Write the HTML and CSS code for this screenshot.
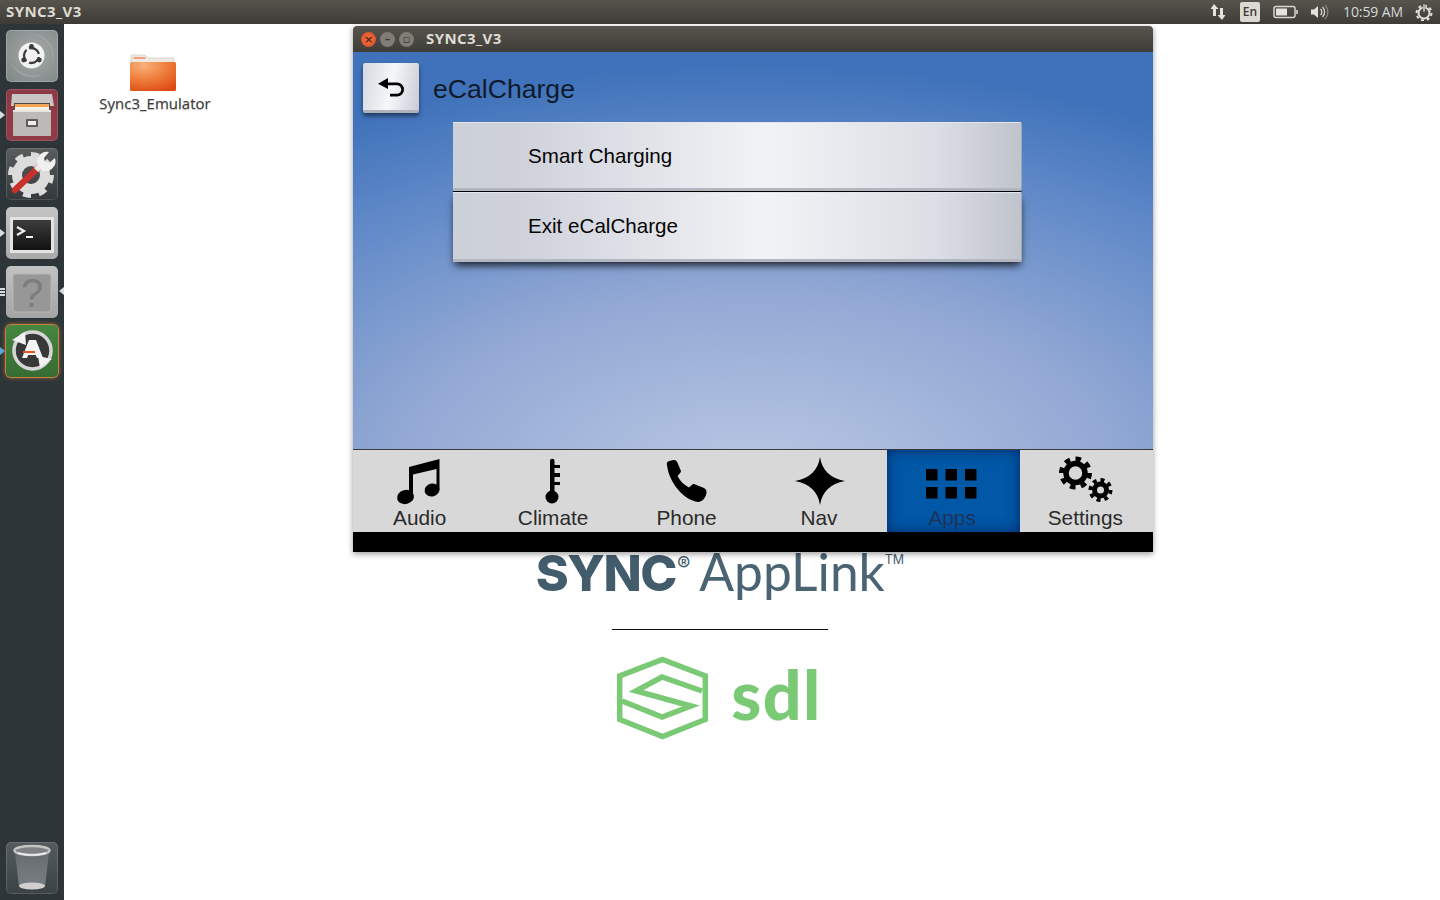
FILE: index.html
```html
<!DOCTYPE html>
<html lang="en">
<head>
<meta charset="utf-8">
<title>SYNC3_V3</title>
<link rel="stylesheet" href="styles.css">
</head>
<body>
<header class="topbar">
  <div class="topbar-title">SYNC3_V3</div>
  <div class="indicators">
    <svg class="ind ind-net" width="18" height="18" viewBox="0 0 18 18"><path d="M5 1 9.500 6H7v7H4V6H1.500zM13 17 8.500 12H11V5h3v7h2.500z" fill="#e4e2dc"/></svg>
    <div class="lang">En</div>
    <svg class="ind ind-batt" width="26" height="14" viewBox="0 0 26 14"><rect x="1" y="1.500" width="21" height="11" rx="2" fill="none" stroke="#d8d6cf" stroke-width="1.500"/><rect x="3" y="3.500" width="11" height="7" fill="#e4e2dc"/><rect x="23" y="5" width="2" height="4" fill="#bdbbb4"/></svg>
    <svg class="ind ind-vol" width="20" height="16" viewBox="0 0 20 16"><path d="M1 5.500h3L8 2v12L4 10.500H1z" fill="#e4e2dc"/><path d="M10.500 5a4 4 0 0 1 0 6M12.500 3a7 7 0 0 1 0 10" fill="none" stroke="#d8d6cf" stroke-width="1.300"/><path d="M15 1a10 10 0 0 1 0 14" fill="none" stroke="#87857e" stroke-width="1.300"/></svg>
    <div class="clock">10:59 AM</div>
    <svg class="ind ind-gear" width="18" height="18" viewBox="0 0 18 18"><circle cx="9" cy="10" r="5.500" fill="none" stroke="#e4e2dc" stroke-width="2"/><circle cx="9" cy="10" r="7.500" fill="none" stroke="#e4e2dc" stroke-width="2" pathLength="48" stroke-dasharray="3 3"/><rect x="8" y="1" width="2" height="8" fill="#e4e2dc" stroke="#45433d" stroke-width=".6"/></svg>
  </div>
</header>

<div class="screen">
  <nav class="launcher">
    <div class="tile tile-ubuntu">
      <svg width="52" height="52" viewBox="0 0 52 52">
        <path d="M26 4a22 22 0 0 1 20 30A24 24 0 0 0 26 4z" fill="#ffffff" fill-opacity=".14"/>
        <path d="M5 32a22 22 0 0 0 34 11A26 26 0 0 1 5 32z" fill="#ffffff" fill-opacity=".14"/>
        <circle cx="25.500" cy="25.500" r="13" fill="#f3f3f1"/>
        <circle cx="25.500" cy="25.500" r="7.500" fill="none" stroke="#3b3b3b" stroke-width="2.300"/>
        <g fill="#f3f3f1"><rect x="15" y="24" width="5" height="3" transform="rotate(60 25.500 25.500)"/><rect x="15" y="24" width="5" height="3" transform="rotate(180 25.500 25.500)"/><rect x="15" y="24" width="5" height="3" transform="rotate(300 25.500 25.500)"/></g>
        <g fill="#3b3b3b"><circle cx="25.500" cy="16.500" r="2.400"/><circle cx="17.700" cy="30" r="2.400"/><circle cx="33.300" cy="30" r="2.400"/></g>
      </svg>
    </div>
    <div class="tile tile-files has-pip">
      <svg width="52" height="52" viewBox="0 0 52 52">
        <path d="M6 5h40l2 12H5z" fill="#c9c7c3"/><rect x="8" y="14" width="36" height="12" fill="#4b4a48"/>
        <rect x="9" y="15" width="34" height="3" fill="#f3a65a"/><rect x="9" y="18" width="34" height="3" fill="#f4f0e6"/>
        <rect x="7" y="21" width="38" height="26" rx="1" fill="#bcbab7"/><rect x="7" y="21" width="38" height="2" fill="#e8e7e4"/>
        <rect x="20" y="30" width="12" height="8" rx="1" fill="#5d5c5a"/><rect x="22" y="32" width="8" height="4" fill="#efeeec"/>
      </svg>
    </div>
    <div class="tile tile-settings">
      <svg width="52" height="52" viewBox="0 0 52 52">
        <circle cx="25" cy="27" r="14" fill="none" stroke="#dcdcdc" stroke-width="10"/>
        <circle cx="25" cy="27" r="20.500" fill="none" stroke="#dcdcdc" stroke-width="5" pathLength="80" stroke-dasharray="5 5"/>
        <path d="M9 42 32 20" stroke="#c9302c" stroke-width="6.500" stroke-linecap="round"/>
        <path d="M30 22 37 15" stroke="#e9e9e9" stroke-width="6"/>
        <path d="M31 14a10 10 0 0 1 12-10l-5 6 1 4 4 1 6-5a10 10 0 0 1-14 12z" fill="#f0f0f0"/>
      </svg>
    </div>
    <div class="tile tile-terminal has-pip">
      <svg width="52" height="52" viewBox="0 0 52 52">
        <defs><linearGradient id="termFill" x1="0" y1="0" x2="0" y2="1"><stop offset="0" stop-color="#3d3d3d"/><stop offset="1" stop-color="#111111"/></linearGradient></defs>
        <rect x="4" y="10" width="44" height="36" fill="#e3e3e3"/><rect x="7" y="13" width="38" height="30" fill="url(#termFill)"/>
        <path d="M11 20l7 4-7 4" fill="none" stroke="#efefef" stroke-width="2.200"/><rect x="20" y="29" width="7" height="2" fill="#efefef"/>
      </svg>
    </div>
    <div class="tile tile-help has-lines">
      <svg width="52" height="52" viewBox="0 0 52 52">
        <rect x="7" y="8" width="38" height="38" rx="2" fill="#979797" stroke="#b5b5b5"/>
        <text class="help-mark" x="26" y="41" text-anchor="middle">?</text>
      </svg>
    </div>
    <div class="tile tile-update has-pip-blue">
      <svg width="52" height="52" viewBox="0 0 52 52">
        <circle cx="26.500" cy="25.500" r="18" fill="#383838"/>
        <circle cx="26.500" cy="25.500" r="18.500" fill="none" stroke="#d6d6d6" stroke-width="3.500"/>
        <path d="M6 15 19 7l1 13zM46 34l-12 9-2-12z" fill="#f2f2f2"/>
        <path d="M23 15h7l7 18h-6l-1.200-3h-7.600L21 33h-5z" fill="#f4f4f4"/>
        <rect x="17" y="26" width="12" height="2" fill="#e2551f"/>
      </svg>
    </div>
    <div class="tile tile-trash">
      <svg width="52" height="52" viewBox="0 0 52 52">
        <defs><linearGradient id="binFill" x1="0" y1="0" x2="0" y2="1"><stop offset="0" stop-color="#6f7577"/><stop offset="1" stop-color="#90979a"/></linearGradient></defs>
        <path d="M9 10 13 45h26l4-35z" fill="url(#binFill)" fill-opacity=".7"/>
        <ellipse cx="26" cy="44" rx="13" ry="3.500" fill="#cfcfcf"/>
        <ellipse cx="26" cy="8.500" rx="17.500" ry="4.500" fill="#7d8385" stroke="#c4c4c4" stroke-width="2.500"/>
        <path d="M12 11q14 4 28 0" fill="none" stroke="#f0f0f0" stroke-width="1.500"/>
      </svg>
    </div>
  </nav>

  <main class="desktop">
    <div class="desk-icon">
      <svg width="48" height="40" viewBox="0 0 48 40">
        <defs><radialGradient id="folderFill" cx=".3" cy=".1" r="1"><stop offset="0" stop-color="#f7b27c"/><stop offset=".55" stop-color="#ee7a38"/><stop offset="1" stop-color="#dd4a14"/></radialGradient></defs>
        <path d="M2 6V3a1 1 0 0 1 1-1h13l3 3h25a1 1 0 0 1 1 1v4H2z" fill="#efe9e1" stroke="#c9c3bb" stroke-width=".6"/>
        <rect x="4.500" y="4" width="12" height="2" fill="#f0a27a"/>
        <rect x="1" y="9" width="46" height="29" rx="1.500" fill="url(#folderFill)"/>
      </svg>
      <div class="desk-label">Sync3_Emulator</div>
    </div>

    <section class="window">
      <div class="titlebar">
        <div class="wbtn wbtn-close">×</div>
        <div class="wbtn wbtn-min">–</div>
        <div class="wbtn wbtn-max">▫</div>
        <div class="window-title">SYNC3_V3</div>
      </div>
      <div class="content">
        <div class="head">
          <div class="back">
            <svg width="28" height="24" viewBox="0 0 28 24"><path d="M1 8.700 11 3v4.500h9a7 7 0 0 1 0 14h-7v-2.700h7a4.300 4.300 0 0 0 0-8.600h-9V14z" fill="#000"/></svg>
          </div>
          <div class="head-title">eCalCharge</div>
        </div>
        <div class="menu">
          <div class="menu-item">Smart Charging</div>
          <div class="menu-item">Exit eCalCharge</div>
        </div>
      </div>
      <div class="nav">
        <div class="nav-item">
          <svg width="60" height="56" viewBox="0 0 60 56"><ellipse cx="15.500" cy="47" rx="8.500" ry="7" transform="rotate(-15 15.500 47)"/><ellipse cx="42" cy="40" rx="7.500" ry="6.500" transform="rotate(-15 42 40)"/><path d="M19 47V17L49.500 9v31h-3V19L23 24.500V47z"/></svg>
          <span class="nav-label">Audio</span>
        </div>
        <div class="nav-item">
          <svg width="60" height="56" viewBox="0 0 60 56"><circle cx="29" cy="47" r="6.500"/><path d="M27 11a2 2 0 0 1 4.500 0v4H37v3h-5.500v5H37v4h-5.500v5H37v3h-5.500v8H27z"/></svg>
          <span class="nav-label">Climate</span>
        </div>
        <div class="nav-item">
          <svg width="60" height="56" viewBox="0 0 60 56"><path d="M10 15C9 11 12 11 17 10 19 10 20 11 21 14L24 21C24 23 22 24 20.500 26 23 31 27 35 32 37.500 34 36 35 34 37 34L47 38C50 40 50 42 49 45 47 50 44 52 41 52 27 50 12 33 10 15Z"/></svg>
          <span class="nav-label">Phone</span>
        </div>
        <div class="nav-item">
          <svg width="60" height="56" viewBox="0 0 60 56"><path d="M30 7Q33 27 55 31 33 35 30 55 27 35 5 31 27 27 30 7Z"/></svg>
          <span class="nav-label">Nav</span>
        </div>
        <div class="nav-item nav-active">
          <svg width="60" height="56" viewBox="0 0 60 56"><path d="M3 19h11.500v11.500H3zM22.500 19H34v11.500H22.500zM42 19h11.500v11.500H42zM3 37h11.500v11.500H3zM22.500 37H34v11.500H22.500zM42 37h11.500v11.500H42z"/></svg>
          <span class="nav-label">Apps</span>
        </div>
        <div class="nav-item">
          <svg width="60" height="56" viewBox="0 0 60 56" fill="none" stroke="#000"><circle cx="19.500" cy="23" r="9.500" stroke-width="5.500"/><circle cx="19.500" cy="23" r="14" stroke-width="5" pathLength="72" stroke-dasharray="4.500 4.500"/><circle cx="44.500" cy="40" r="6" stroke-width="5"/><circle cx="44.500" cy="40" r="10" stroke-width="4" pathLength="64" stroke-dasharray="4 4"/></svg>
          <span class="nav-label">Settings</span>
        </div>
      </div>
      <div class="blackbar"></div>
    </section>

    <div class="logos">
      <div class="sync-logo">
        <span class="sync">SYNC</span><span class="reg">®</span><span class="applink">AppLink</span><span class="tm">TM</span>
      </div>
      <div class="rule"></div>
      <div class="sdl-logo">
        <svg width="98" height="90" viewBox="0 0 98 90" fill="none" stroke="#7ac974" stroke-width="5.500">
          <path d="M48.500 5.500 91.300 22V65.500L48.500 82.500 5.700 65.500V22Z"/>
          <path d="M88 37 48 23 22 37 77 52 48 63 8 47"/>
        </svg>
        <span class="sdl">sdl</span>
      </div>
    </div>
  </main>
</div>
</body>
</html>
```
FILE: styles.css
```css
* { box-sizing: border-box; }
html, body { margin: 0; height: 100%; }
body {
  width: 1440px;
  height: 900px;
  overflow: hidden;
  display: flex;
  flex-direction: column;
  background: #fff;
  font-family: "Liberation Sans", Arial, sans-serif;
}

/* top panel */
.topbar {
  height: 24px;
  flex: none;
  display: flex;
  align-items: center;
  justify-content: space-between;
  padding: 0 7px 0 6px;
  background: linear-gradient(#56544c, #3c3b36);
  color: #dfdbd2;
}
.topbar-title, .window-title {
  font: 700 15px "Open Sans", sans-serif;
  letter-spacing: .4px;
  margin-bottom: 2px;
}
.indicators { display: flex; align-items: center; }
.ind { flex: none; display: block; }
.ind-batt { margin-left: 13px; }
.ind-vol { margin-left: 11px; }
.ind-gear { margin-left: 12px; }
.lang {
  width: 20px;
  height: 20px;
  margin-left: 13px;
  background: #dbd9d2;
  border-radius: 2px;
  color: #3c3b36;
  font: 600 12px/20px "Open Sans", sans-serif;
  text-align: center;
}
.clock {
  margin-left: 13px;
  margin-bottom: 2px;
  font: 400 14px "Open Sans", sans-serif;
  letter-spacing: -.1px;
  color: #d6d9dc;
}

/* launcher */
.screen { flex: 1; display: flex; min-height: 0; }
.launcher {
  width: 64px;
  flex: none;
  display: flex;
  flex-direction: column;
  gap: 7px;
  padding: 6px 6px;
  background: #2d3539;
}
.tile {
  position: relative;
  width: 52px;
  height: 52px;
  flex: none;
  border-radius: 5px;
}
.tile svg { display: block; }
.tile-ubuntu { background: radial-gradient(circle at 55% 45%, #a6abaa, #7d8585); box-shadow: inset 0 0 0 1px #ffffff33; }
.tile-files { background: #8e3b47; box-shadow: inset 0 0 0 1px #ffffff22; }
.tile-settings { background: linear-gradient(#5a5d5e, #33383b); box-shadow: inset 0 0 0 1px #ffffff22; }
.tile-terminal { background: linear-gradient(#c4c4c4, #a9a9a9); }
.tile-help { background: linear-gradient(#c2c2c2, #a4a4a4); }
.tile-update { background: linear-gradient(#46863f, #376c33); box-shadow: 0 0 0 1px #c8823f, 0 0 4px 1px #c8823faa; }
.tile-trash { margin-top: auto; background: linear-gradient(#555b5e, #3b4245); box-shadow: inset 0 0 0 1px #ffffff22; }
.help-mark { font: 400 40px "Liberation Sans", sans-serif; fill: #7c7c7c; }
.has-pip::before, .has-pip-blue::before {
  content: "";
  position: absolute;
  left: -6px;
  top: 22px;
  border-left: 5px solid #d8dcde;
  border-top: 4px solid transparent;
  border-bottom: 4px solid transparent;
}
.has-pip-blue::before { border-left-color: #5aa7d8; }
.has-lines::before {
  content: "";
  position: absolute;
  left: -6px;
  top: 22px;
  width: 5px;
  height: 8px;
  background: repeating-linear-gradient(#d8dcde 0 2px, transparent 2px 3px);
}
.has-lines::after {
  content: "";
  position: absolute;
  right: -6px;
  top: 21px;
  border-right: 5px solid #d8dcde;
  border-top: 4px solid transparent;
  border-bottom: 4px solid transparent;
}

/* desktop canvas */
.desktop { position: relative; flex: 1; background: #fff; }
.desk-icon {
  position: absolute;
  left: 26px;
  top: 29px;
  width: 130px;
  display: flex;
  flex-direction: column;
  align-items: center;
}
.desk-icon svg { margin-left: -4px; display: block; }
.desk-label {
  font: 400 15px/20px "Open Sans", sans-serif;
  color: #3a3a3a;
  text-shadow: 0 1px 1px #0000004d;
}

/* window */
.window {
  position: absolute;
  left: 289px;
  top: 2px;
  width: 800px;
  z-index: 1;
  box-shadow: 0 2px 6px #00000066;
}
.titlebar {
  height: 26px;
  display: flex;
  align-items: center;
  padding-left: 8px;
  gap: 4px;
  background: linear-gradient(#57554d, #3d3c37);
  color: #dfdbd2;
  border-radius: 4px 4px 0 0;
}
.wbtn {
  width: 15px;
  height: 15px;
  flex: none;
  border-radius: 50%;
  font: 700 11px/15px "DejaVu Sans", sans-serif;
  text-align: center;
  color: #3c3b36;
  background: #7f7d75;
}
.wbtn-close { background: radial-gradient(circle, #f0764a, #d8481e); color: #5a2412; }
.window-title { margin-left: 8px; }

.content {
  height: 397px;
  padding: 11px 10px 0;
  display: flex;
  flex-direction: column;
  gap: 9px;
  background: radial-gradient(ellipse 100% 105% at 50% 108%, #bac8e4 0%, #93a9d4 45%, #6089c8 78%, #3f72ba 100%);
}
.head { display: flex; align-items: center; gap: 14px; height: 50px; }
.back {
  width: 56px;
  height: 50px;
  flex: none;
  display: flex;
  justify-content: center;
  padding-top: 12px;
  border-radius: 2px;
  background: linear-gradient(100deg, #d6d8e0, #f6f7f9 50%, #c9ccd6);
  border-bottom: 3px solid #aeb2bd;
  box-shadow: 0 3px 4px #00000080;
}
.head-title { font-size: 26.6px; color: #0f1a2b; padding-top: 2px; }
.menu { margin-left: 90px; width: 569px; display: flex; flex-direction: column; gap: 1px; }
.menu-item {
  height: 69px;
  padding-left: 75px;
  display: flex;
  align-items: center;
  font-size: 20.6px;
  color: #050505;
  border-top: 1px solid #e4e6ec;
  border-bottom: 3px solid #b3b7c2;
  border-right: 1px solid #a4a8b3;
  border-radius: 0 2px 2px 0;
  background: linear-gradient(90deg, #ccd0d9 0%, #cfd2db 12%, #f2f3f6 55%, #dcdee5 85%, #bfc3cc 100%);
}
.menu-item:last-child { height: 70px; box-shadow: 0 5px 8px -2px #000000d9; }
.menu-item:first-child { box-shadow: 0 1px 0 #000; }

.nav {
  height: 83px;
  display: flex;
  background: #d8d8d8;
  border-top: 1px solid #3a3a3a;
}
.nav-item {
  flex: 1;
  display: flex;
  flex-direction: column;
  align-items: center;
}
.nav-item svg { display: block; flex: none; }
.nav-label { font-size: 20.8px; line-height: 24px; color: #2a2a2a; }
.nav-item:nth-child(n+4) .nav-label { margin-right: 2px; }
.nav-active { flex: 0 0 133px; background: #0058a6; box-shadow: inset 0 0 14px #00296b; }
.nav-active .nav-label { color: #1d3359; }
.blackbar { height: 20px; background: #000; }

/* logos on the desktop */
.logos {
  position: absolute;
  left: 0;
  right: 64px;
  top: 519px;
  display: flex;
  flex-direction: column;
  align-items: center;
}
.sync-logo {
  height: 61px;
  display: flex;
  align-items: baseline;
  color: #44606f;
  white-space: nowrap;
}
.sync { font: 800 50px/56px Inter, sans-serif; letter-spacing: -1.5px; color: #435c6b; }
.reg { font: 400 20px Inter, sans-serif; align-self: flex-start; margin: 9px 9px 0 1px; }
.applink { font: 400 51.5px/56px Lato, sans-serif; color: #4b6474; }
.tm { font: 400 12.5px Inter, sans-serif; align-self: flex-start; margin-top: 9px; }
.rule { width: 216px; height: 1px; margin-top: 25px; background: #111; }
.sdl-logo { margin-top: 24px; display: flex; align-items: center; gap: 19px; margin-left: -4px; }
.sdl-logo svg { display: block; }
.sdl { font: 900 68px/80px Lato, sans-serif; letter-spacing: 1.5px; color: #7ac974; padding-bottom: 10px; }
```
